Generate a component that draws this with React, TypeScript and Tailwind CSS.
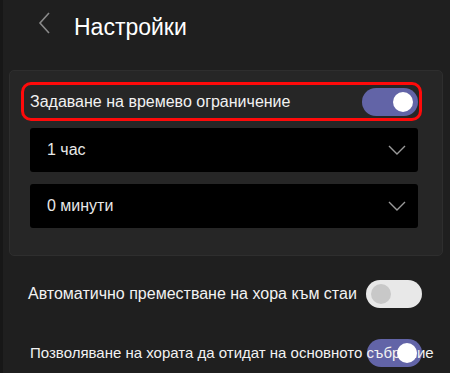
export default function App() {
  return (
    <div
      className="relative w-[450px] h-[373px] overflow-hidden bg-[#1f1f1f] border-l-[3px] border-[#171717] text-white"
      style={{ fontFamily: '"Liberation Sans", Arial, sans-serif' }}
    >
      {/* header */}
      <div className="flex items-center h-[54px] pl-[34px]">
        <svg width="16" height="24" viewBox="0 0 16 24" className="mr-[21px] -mt-[8px]">
          <path d="M12 2 L3 12 L12 22" fill="none" stroke="#8a8a8a" strokeWidth="1.6" />
        </svg>
        <span className="text-[23px]">Настройки</span>
      </div>

      {/* card */}
      <div className="ml-[6px] mr-[7px] mt-[16px] h-[186px] rounded-[5px] border border-[#2e2e2e] bg-[#262626] pt-[11px] pl-[11px] pr-[20px]">
        <div className="flex items-center justify-between h-[39px] rounded-[10px] border-[3px] border-[#ff0a0a] pl-[6px] pr-[1px]">
          <span className="text-[16px] text-[#f2f2f2]">Задаване на времево ограничение</span>
          <div className="flex items-center justify-end w-[56px] h-[28px] rounded-full bg-[#6264a7] pr-[5px]">
            <div className="w-[20px] h-[20px] rounded-full bg-white" />
          </div>
        </div>

        <div className="ml-[9px] mr-[4px] mt-[7px] flex flex-col gap-[12px]">
          <div className="flex items-center justify-between h-[44px] rounded-[3px] bg-black pl-[17px] pr-[12px]">
            <span className="text-[16px] text-[#e8e8e8]">1 час</span>
            <svg width="18" height="12" viewBox="0 0 18 12">
              <path d="M1 2 L9 10 L17 2" fill="none" stroke="#9a9a9a" strokeWidth="1.4" />
            </svg>
          </div>
          <div className="flex items-center justify-between h-[44px] rounded-[3px] bg-black pl-[17px] pr-[12px]">
            <span className="text-[16px] text-[#e8e8e8]">0 минути</span>
            <svg width="18" height="12" viewBox="0 0 18 12">
              <path d="M1 2 L9 10 L17 2" fill="none" stroke="#9a9a9a" strokeWidth="1.4" />
            </svg>
          </div>
        </div>
      </div>

      {/* rows */}
      <div className="flex items-center justify-between mt-[23px] pl-[25px] pr-[28px] h-[30px]">
        <span className="text-[16px] text-[#f2f2f2]">Автоматично преместване на хора към стаи</span>
        <div className="flex items-center w-[56px] h-[28px] rounded-full bg-[#e8e8e8] pl-[5px] shrink-0">
          <div className="w-[20px] h-[20px] rounded-full bg-[#c8c8c8]" />
        </div>
      </div>

      <div className="relative mt-[29px] h-[30px] pl-[27px] flex items-center">
        <div className="absolute left-[364px] top-[1px] w-[55px] h-[28px] rounded-full bg-[#6264a7]" />
        <span className="relative text-[15px] text-[#f2f2f2] whitespace-nowrap">
          Позволяване на хората да отидат на основното събрание
        </span>
        <div className="absolute left-[394px] top-[5px] w-[20px] h-[20px] rounded-full bg-white" />
      </div>
    </div>
  );
}
